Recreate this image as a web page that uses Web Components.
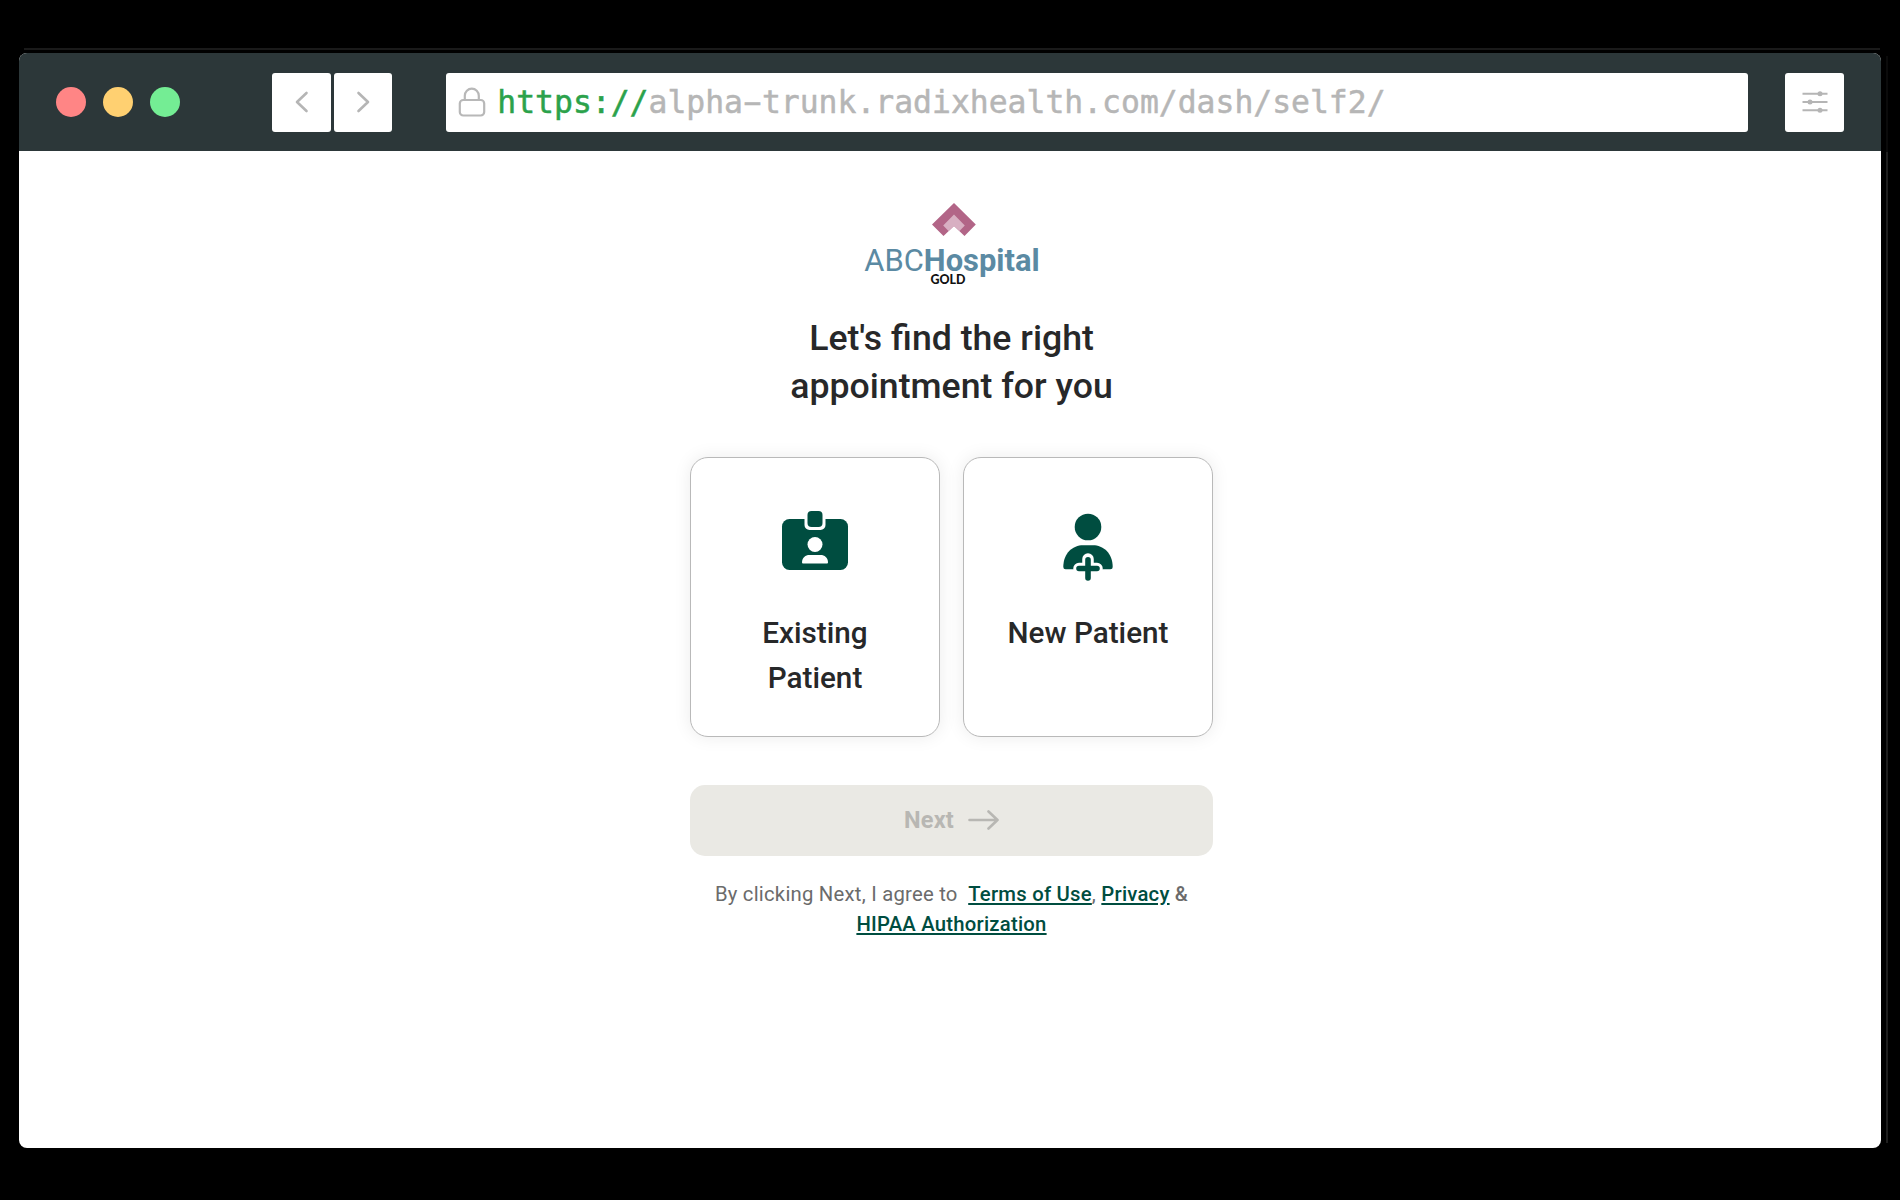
<!DOCTYPE html>
<html lang="en">
<head>
<meta charset="utf-8">
<title>ABCHospital</title>
<style>
html,body{margin:0;background:#000;height:1200px;overflow:hidden}
body{font-family:Roboto,sans-serif;box-sizing:border-box;padding:53px 19px 52px;color:#272829}
</style>
</head>
<body>
<browser-window>
  <browser-bar slot="bar"></browser-bar>
  <booking-page></booking-page>
</browser-window>
<script>
const define=(name,html)=>customElements.define(name,class extends HTMLElement{
  constructor(){super();this.attachShadow({mode:'open'}).innerHTML=html;}
});

define('browser-window',`<style>
:host{display:flex;flex-direction:column;height:1095px;position:relative;background:#fff;border-radius:8px}
.edge{position:absolute;background:#1a1a1a}
.top{left:5px;right:1px;top:-5px;height:2px}
.right{right:-7px;top:3px;bottom:5px;width:2px;background:linear-gradient(#0b0b0b 96px,#1f1f1f 96px)}
</style><i class="edge top"></i><i class="edge right"></i><slot name="bar"></slot><slot></slot>`);

define('nav-button',`<style>
:host{display:flex;align-items:center;justify-content:center;width:59px;height:59px;background:#fff;border-radius:3px;flex:none}
</style><slot></slot>`);

define('browser-bar',`<style>
:host{display:flex;align-items:center;height:98px;box-sizing:border-box;background:#2c3739;border-radius:8px 8px 0 0;padding:0 37px}
.dots{display:flex;gap:17px;width:216px}
.dots i{width:30px;height:30px;border-radius:50%}
.nav{display:flex;gap:3px;margin-right:54px}
.nav nav-button+nav-button{width:58px}
.url{display:flex;align-items:center;width:1302px;height:59px;background:#fff;border-radius:3px;margin-right:37px;box-sizing:border-box;padding-left:12px;color:#b6b6b6;font:31.4px/59px "DejaVu Sans Mono",monospace;-webkit-text-stroke:.5px currentColor}
.url svg{margin-right:11.300px;flex:none}
.url b{font-weight:400;color:#2ba24b}
.url i{font-style:normal;display:inline-block;transform:scaleX(1.85)}
svg{display:block}
</style>
<div class="dots"><i style="background:#ff8585"></i><i style="background:#ffd071"></i><i style="background:#74ed94"></i></div>
<div class="nav">
<nav-button><svg width="14" height="22" viewBox="0 0 14 22" fill="none" stroke="#b5b5b5" stroke-width="2.600" stroke-linecap="round" stroke-linejoin="round"><path d="M11.500 2 2 11l9.500 9"/></svg></nav-button>
<nav-button><svg width="14" height="22" viewBox="0 0 14 22" fill="none" stroke="#b5b5b5" stroke-width="2.600" stroke-linecap="round" stroke-linejoin="round"><path d="M2.500 2 12 11l-9.500 9"/></svg></nav-button>
</div>
<div class="url"><svg width="28" height="30" viewBox="0 0 28 30" fill="none" stroke="#b8b8b8" stroke-width="2.200"><rect x="1.800" y="13" width="24.400" height="15.500" rx="3.500"/><path d="M6.800 13V8.700a7 7 0 0 1 14 0V13"/></svg><span><b>https://</b>alpha<i>-</i>trunk.radixhealth.com/dash/self2/</span></div>
<nav-button><svg width="26" height="22" viewBox="0 0 26 22" fill="#b5b5b5" stroke="#b5b5b5" stroke-width="2"><path d="M.5 2.700h25M.5 11h25M.5 19.300h25"/><g stroke="none"><circle cx="18" cy="2.700" r="2.500"/><circle cx="8" cy="11" r="2.500"/><circle cx="18" cy="19.300" r="2.500"/></g></svg></nav-button>`);

define('hospital-logo',`<style>
:host{display:flex;flex-direction:column;align-items:center;height:88px;color:#5b8aa3}
svg{display:block;margin-left:4px;flex:none}
.name{font-size:30.900px;line-height:36px;margin:6px 0 0 1px;white-space:nowrap}
.name b{font-weight:700}
.gold{font:900 12.400px/14px Lato,sans-serif;color:#111;margin:-6px 7px 0 0}
</style>
<svg width="44" height="34" viewBox="0 0 44 34"><path fill="#b26587" d="M22 0 43.800 21.500 32.500 33 22 23 11.500 33 0 21.500Z"/><path fill="#d8afc2" d="M22 11.500 32.800 22.500 27.500 28 22 23 16.500 28 11.200 22.500Z"/></svg>
<div class="name">ABC<b>Hospital</b></div><div class="gold">GOLD</div>`);

define('choice-card',`<style>
:host{display:flex;flex-direction:column;align-items:center;box-sizing:border-box;width:250px;height:280.500px;border:1px solid #b9b9b9;border-radius:18px;background:#fff;box-shadow:0 0 18px rgba(0,0,0,.08);padding-top:49px;text-align:center;font-weight:500;font-size:29.700px;line-height:44.500px}
.icon{height:104.500px}
</style><div class="icon"><slot name="icon"></slot></div><slot></slot>`);

define('next-button',`<style>
:host{display:flex;align-items:center;justify-content:center;gap:14px;height:71px;border-radius:15px;background:#eae9e4;color:#b8b7b3;font-weight:700;font-size:23.500px;letter-spacing:.2px}
</style><span><slot></slot></span><svg width="31" height="20" viewBox="0 0 31 20" fill="none" stroke="#b8b7b3" stroke-width="2.600" stroke-linecap="round" stroke-linejoin="round"><path d="M1.500 10h28M20.500 1.500 29.500 10l-9 8.500"/></svg>`);

define('legal-note',`<style>
:host{display:block;text-align:center;font-size:20.300px;line-height:29.700px;letter-spacing:.23px;color:#6b6b6b;white-space:nowrap}
a{color:#004d40;font-weight:500;text-decoration:underline;text-underline-offset:2px;text-decoration-thickness:1.500px}
span{white-space:pre}
b{font-weight:500}
</style><span>By clicking Next, I agree to  <a>Terms of Use</a>, <a>Privacy</a> <b>&amp;</b></span><br><a>HIPAA Authorization</a>`);

define('booking-page',`<style>
:host{display:flex;flex-direction:column;align-items:center;padding:52px 0 0 3px}
main{display:flex;flex-direction:column;width:523px}
h1{margin:24px 0 0;text-align:center;font-weight:500;font-size:35.650px;line-height:47.600px}
.cards{display:flex;gap:23px;margin:46.800px 0 47.500px}
legal-note{margin-top:24px}
svg{display:block}
</style><main>
<hospital-logo></hospital-logo>
<h1>Let's find the right<br>appointment for you</h1>
<div class="cards">
<choice-card><svg slot="icon" width="68" height="68" viewBox="0 0 68 68"><rect x="1" y="12" width="66" height="51" rx="7.500" fill="#004d40"/><path d="M23.500 11h21v7a5 5 0 0 1-5 5h-11a5 5 0 0 1-5-5z" fill="#fff"/><rect x="26.500" y="4" width="15" height="16" rx="4" fill="#004d40"/><circle cx="34" cy="37.500" r="7.500" fill="#fff"/><path d="M21 55.500c0-5 3.500-7.500 7.500-7.500h11c4 0 7.500 2.500 7.500 7.500q0 1-1 1H22q-1 0-1-1z" fill="#fff"/></svg><span>Existing</span><span>Patient</span></choice-card>
<choice-card><svg slot="icon" width="52" height="76" viewBox="0 0 52 76"><circle cx="26" cy="20" r="13.300" fill="#004d40"/><path d="M1.300 60C1.300 46 11 38.300 21 38.300H31C41 38.300 50.700 46 50.700 60q0 2.300-2.300 2.300H3.600q-2.300 0-2.300-2.300z" fill="#004d40"/><g fill="none" stroke-linecap="round"><path d="M26 52v19M17 61.500h18" stroke="#fff" stroke-width="11.500"/><path d="M26 52.800v18.200M17 61.500h18" stroke="#004d40" stroke-width="5.600"/></g></svg><span>New Patient</span></choice-card>
</div>
<next-button>Next</next-button>
<legal-note></legal-note>
</main>`);
</script>
</body>
</html>
